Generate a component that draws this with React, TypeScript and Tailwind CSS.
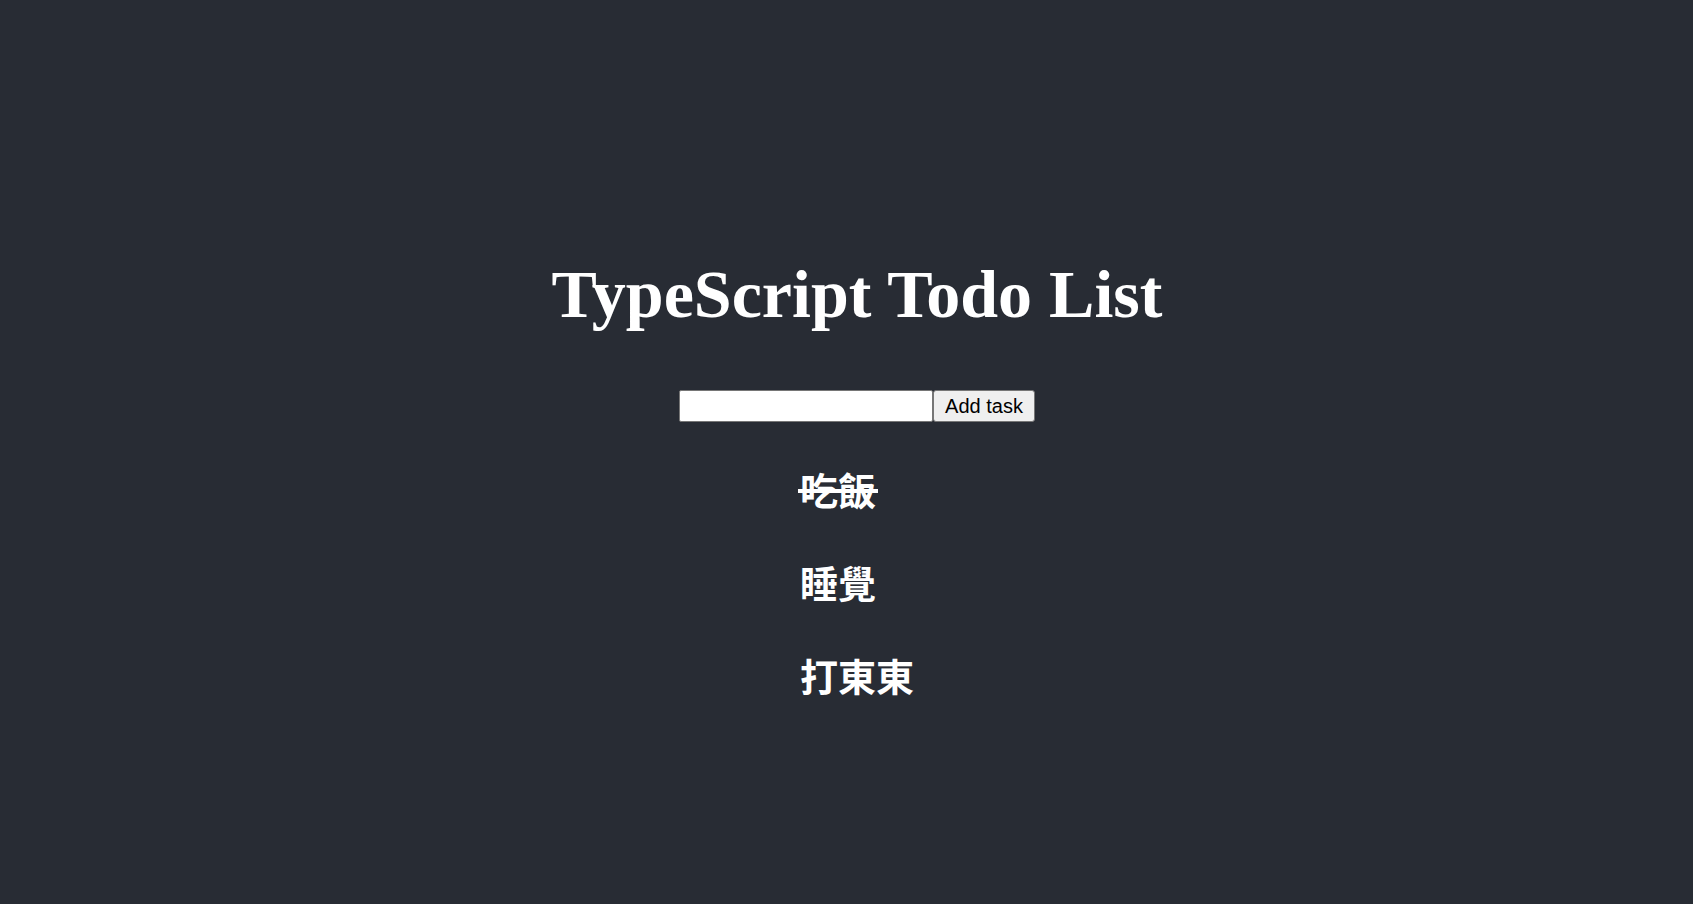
import { useState } from "react";

type Task = { id: number; text: string; done: boolean };

export default function App() {
  const [tasks, setTasks] = useState<Task[]>([
    { id: 1, text: "吃飯", done: true },
    { id: 2, text: "睡覺", done: false },
    { id: 3, text: "打東東", done: false },
  ]);
  const [input, setInput] = useState("");

  const addTask = () => {
    if (!input.trim()) return;
    setTasks([...tasks, { id: Date.now(), text: input, done: false }]);
    setInput("");
  };

  return (
    <div className="min-h-screen bg-[#282c34] text-white">
      <div className="flex flex-col items-center pt-[257px] pl-[21px]">
        {/* Title */}
        <h1 className="font-['Liberation_Serif','Times_New_Roman',serif] font-bold text-[68px] leading-[75px]">
          TypeScript Todo List
        </h1>

        {/* Input row */}
        <div className="flex mt-[58px]">
          <input
            value={input}
            onChange={(e) => setInput(e.target.value)}
            className="w-[254px] h-[32px] bg-white border border-[#767676] rounded-[2px] text-black px-1 text-[18px] outline-none"
          />
          <button
            onClick={addTask}
            className="w-[102px] h-[32px] bg-[#efefef] border border-[#767676] rounded-[3px] text-black text-[20px] font-['Liberation_Sans',Arial,sans-serif] leading-none"
          >
            Add task
          </button>
        </div>

        {/* Tasks */}
        <ul className="flex flex-col gap-[47px] mt-[44px]">
          {tasks.map((t) => (
            <li
              key={t.id}
              onClick={() =>
                setTasks(tasks.map((x) => (x.id === t.id ? { ...x, done: !x.done } : x)))
              }
              className="cursor-pointer font-['Noto_Sans_CJK_TC','Noto_Sans_CJK_SC',sans-serif] font-bold text-[38px] leading-[46px]"
            >
              <span className="relative inline-block">
                {t.text}
                {/* strike line for finished tasks */}
                {t.done && (
                  <span className="absolute left-[-2px] right-[-2px] top-[23px] h-[4px] bg-white" />
                )}
              </span>
            </li>
          ))}
        </ul>
      </div>
    </div>
  );
}
